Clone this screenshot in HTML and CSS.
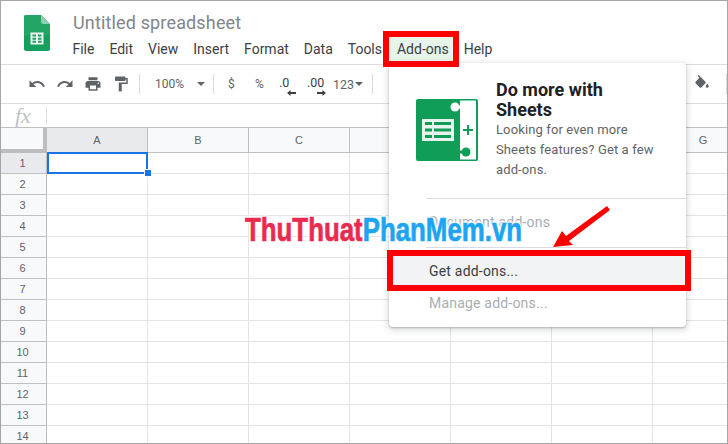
FILE: index.html
```html
<!DOCTYPE html>
<html lang="en">
<head>
<meta charset="utf-8">
<title>Untitled spreadsheet</title>
<link rel="stylesheet" href="styles.css">
</head>
<body>
<div class="frame">
  <header class="header">
    <svg class="logo" width="26" height="36" viewBox="0 0 26 36">
      <path d="M2 0H17L26 9V34a2 2 0 0 1-2 2H2a2 2 0 0 1-2-2V2a2 2 0 0 1 2-2z" fill="#16a05d"/>
      <path d="M2 0H17V7a2 2 0 0 0 2 2h7V20L2 20H0V2a2 2 0 0 1 2-2z" fill="#23a566"/>
      <path d="M17 0L26 9H19a2 2 0 0 1-2-2z" fill="#8ed1b1"/>
      <path d="M6.500 17.500H19.500V29.500H6.500z" fill="#f1f1f1"/>
      <path d="M8.500 19.500h3.500v2h-3.500zM14 19.500h3.500v2H14zM8.500 22.700h3.500v2h-3.500zM14 22.700h3.500v2H14zM8.500 25.800h3.500v2h-3.500zM14 25.800h3.500v2H14z" fill="#1ba261"/>
    </svg>
    <div class="heading">
      <div class="doc-title">Untitled spreadsheet</div>
      <nav class="menubar">
        <span class="menu-item">File</span>
        <span class="menu-item">Edit</span>
        <span class="menu-item">View</span>
        <span class="menu-item">Insert</span>
        <span class="menu-item">Format</span>
        <span class="menu-item">Data</span>
        <span class="menu-item">Tools</span>
        <span class="menu-item menu-active">Add-ons</span>
        <span class="menu-item">Help</span>
      </nav>
    </div>
  </header>

  <div class="toolbar">
    <svg class="tool" width="18" height="18" viewBox="0 0 24 24"><path fill="#5f6368" d="M12.500 8c-2.650 0-5.050.99-6.900 2.600L2 7v9h9l-3.620-3.620c1.390-1.160 3.160-1.880 5.120-1.880 3.540 0 6.550 2.310 7.600 5.500l2.370-.78C21.080 11.030 17.150 8 12.500 8z"/></svg>
    <svg class="tool" width="18" height="18" viewBox="0 0 24 24"><path fill="#5f6368" d="M18.400 10.600C16.550 8.990 14.150 8 11.500 8c-4.650 0-8.580 3.030-9.980 7.220l2.370.78c1.050-3.190 4.060-5.500 7.610-5.500 1.950 0 3.730.72 5.120 1.880L13 16h9V7l-3.600 3.600z"/></svg>
    <svg class="tool" width="18" height="18" viewBox="0 0 24 24"><path fill="#5f6368" d="M19 8H5c-1.660 0-3 1.340-3 3v6h4v4h12v-4h4v-6c0-1.660-1.340-3-3-3zm-3 11H8v-5h8v5zm3-7c-.55 0-1-.45-1-1s.45-1 1-1 1 .45 1 1-.45 1-1 1zm-1-9H6v4h12V3z"/></svg>
    <svg class="tool" width="18" height="18" viewBox="0 0 24 24"><path fill="#5f6368" d="M18 4V3c0-.55-.45-1-1-1H5c-.55 0-1 .45-1 1v4c0 .55.45 1 1 1h12c.55 0 1-.45 1-1V6h1v4H9v11c0 .55.45 1 1 1h2c.55 0 1-.45 1-1v-9h8V4h-3z"/></svg>
    <span class="sep sep-a"></span>
    <span class="zoom-value">100%</span>
    <span class="caret caret-zoom"></span>
    <span class="sep sep-b"></span>
    <span class="fmt fmt-dollar">$</span>
    <span class="fmt fmt-percent">%</span>
    <span class="fmt-dec fmt-dec-a">.0<svg class="dec-arrow" width="9" height="6" viewBox="0 0 9 6"><path d="M0 3L3.500 0V2H9V4H3.500V6z" fill="#3c4043"/></svg></span>
    <span class="fmt-dec fmt-dec-b">.00<svg class="dec-arrow dec-right" width="9" height="6" viewBox="0 0 9 6"><path d="M9 3L5.500 0V2H0V4H5.500V6z" fill="#3c4043"/></svg></span>
    <span class="fmt fmt-num">123</span>
    <span class="caret caret-num"></span>
    <span class="sep sep-c"></span>
    <svg class="bucket" width="18" height="18" viewBox="0 0 24 24"><path fill="#5f6368" d="M16.560 8.940L7.620 0 6.210 1.410l2.380 2.380-5.150 5.150c-.59.59-.59 1.540 0 2.120l5.500 5.500c.29.29.68.44 1.060.44s.77-.15 1.060-.44l5.500-5.500c.59-.58.59-1.530 0-2.120zM19 11.500s-2 2.170-2 3.500c0 1.100.9 2 2 2s2-.9 2-2c0-1.330-2-3.500-2-3.500z"/></svg>
    <span class="sep sep-d"></span>
  </div>

  <div class="formula">
    <span class="fx">fx</span>
    <span class="fx-sep"></span>
  </div>

  <div class="sheet">
    <div class="corner"></div>
    <div class="col-head col-on">A</div>
    <div class="col-head">B</div>
    <div class="col-head">C</div>
    <div class="col-head"></div>
    <div class="col-head"></div>
    <div class="col-head"></div>
    <div class="col-head">G</div>

    <div class="row-head row-on">1</div><div class="cell cell-active"><span class="handle"></span></div><div class="cell"></div><div class="cell"></div><div class="cell"></div><div class="cell"></div><div class="cell"></div><div class="cell"></div>
    <div class="row-head">2</div><div class="cell"></div><div class="cell"></div><div class="cell"></div><div class="cell"></div><div class="cell"></div><div class="cell"></div><div class="cell"></div>
    <div class="row-head">3</div><div class="cell"></div><div class="cell"></div><div class="cell"></div><div class="cell"></div><div class="cell"></div><div class="cell"></div><div class="cell"></div>
    <div class="row-head">4</div><div class="cell"></div><div class="cell"></div><div class="cell"></div><div class="cell"></div><div class="cell"></div><div class="cell"></div><div class="cell"></div>
    <div class="row-head">5</div><div class="cell"></div><div class="cell"></div><div class="cell"></div><div class="cell"></div><div class="cell"></div><div class="cell"></div><div class="cell"></div>
    <div class="row-head">6</div><div class="cell"></div><div class="cell"></div><div class="cell"></div><div class="cell"></div><div class="cell"></div><div class="cell"></div><div class="cell"></div>
    <div class="row-head">7</div><div class="cell"></div><div class="cell"></div><div class="cell"></div><div class="cell"></div><div class="cell"></div><div class="cell"></div><div class="cell"></div>
    <div class="row-head">8</div><div class="cell"></div><div class="cell"></div><div class="cell"></div><div class="cell"></div><div class="cell"></div><div class="cell"></div><div class="cell"></div>
    <div class="row-head">9</div><div class="cell"></div><div class="cell"></div><div class="cell"></div><div class="cell"></div><div class="cell"></div><div class="cell"></div><div class="cell"></div>
    <div class="row-head">10</div><div class="cell"></div><div class="cell"></div><div class="cell"></div><div class="cell"></div><div class="cell"></div><div class="cell"></div><div class="cell"></div>
    <div class="row-head">11</div><div class="cell"></div><div class="cell"></div><div class="cell"></div><div class="cell"></div><div class="cell"></div><div class="cell"></div><div class="cell"></div>
    <div class="row-head">12</div><div class="cell"></div><div class="cell"></div><div class="cell"></div><div class="cell"></div><div class="cell"></div><div class="cell"></div><div class="cell"></div>
    <div class="row-head">13</div><div class="cell"></div><div class="cell"></div><div class="cell"></div><div class="cell"></div><div class="cell"></div><div class="cell"></div><div class="cell"></div>
    <div class="row-head">14</div><div class="cell"></div><div class="cell"></div><div class="cell"></div><div class="cell"></div><div class="cell"></div><div class="cell"></div><div class="cell"></div>
  </div>

  <div class="dropdown">
    <section class="promo">
      <svg class="promo-icon" width="62" height="62" viewBox="0 0 62 62">
        <rect width="62" height="62" rx="2" fill="#0f9d58"/>
        <rect x="44" y="1.500" width="16" height="59" fill="#fff"/>
        <circle cx="39" cy="8" r="4.500" fill="#fff"/>
        <rect x="39" y="6.500" width="6" height="3" fill="#fff"/>
        <circle cx="50" cy="53" r="4.500" fill="#0f9d58"/>
        <rect x="44" y="51.500" width="6" height="3" fill="#0f9d58"/>
        <rect x="6" y="20" width="32" height="22" fill="#e6f4ec"/>
        <path d="M9 23h7v3H9zM18 23h17v3H18zM9 29.500h7v3H9zM18 29.500h17v3H18zM9 36h7v3H9zM18 36h17v3H18z" fill="#0f9d58"/>
        <path d="M51 26h2v4h4v2h-4v4h-2v-4h-4v-2h4z" fill="#0f9d58"/>
      </svg>
      <div class="promo-text">
        <h2 class="promo-title">Do more with Sheets</h2>
        <p class="promo-desc">Looking for even more Sheets features? Get a few add-ons.</p>
      </div>
    </section>
    <div class="dd-sep"></div>
    <div class="dd-item dd-muted dd-doc">Document add-ons</div>
    <div class="dd-sep dd-sep-2"></div>
    <div class="dd-item dd-hover">Get add-ons...</div>
    <div class="dd-item dd-muted dd-manage">Manage add-ons...</div>
  </div>

  <div class="mark mark-menu"></div>
  <div class="mark mark-item"></div>
  <svg class="arrow" width="64" height="50" viewBox="0 0 64 50">
    <path d="M3 47L12 31L16 36L57 6L60 10L19 41L23 45z" fill="#f00"/>
  </svg>
  <div class="watermark"><span class="wm-red">ThuThuat</span><span class="wm-blue">PhanMem.vn</span></div>
</div>
</body>
</html>
```
FILE: styles.css
```css
* { box-sizing: border-box; }
html, body { margin: 0; padding: 0; background: #fff; }
body { font-family: Roboto, "Liberation Sans", sans-serif; }

.frame {
  position: relative;
  width: 728px;
  height: 444px;
  overflow: hidden;
  border: 1px solid #a6a6a6;
  background: #fff;
}

/* header */
.header {
  display: flex;
  height: 64px;
  border-bottom: 1px solid #dadce0;
}
.logo { margin: 14px 0 0 23px; flex: none; }
.heading { margin-left: 15px; padding-top: 12px; }
.doc-title {
  margin-left: 8px;
  height: 20px;
  font-size: 18px;
  line-height: 20px;
  letter-spacing: .15px;
  color: #80868b;
}
.menubar {
  display: flex;
  margin-top: 4px;
  height: 24px;
  align-items: center;
  font-size: 14px;
  color: #3c4043;
}
.menu-item { padding: 0 7.47px; line-height: 24px; white-space: nowrap; }
.menu-active { background: #e6f4ea; padding: 0 4px 0 7.5px; margin-right: 3.5px; }

/* toolbar */
.toolbar {
  position: relative;
  display: flex;
  align-items: center;
  height: 39px;
  padding-left: 27px;
  border-bottom: 1px solid #dadce0;
  color: #5f6368;
  font-size: 12px;
}
.tool { margin-right: 10px; flex: none; }
.sep { width: 1px; height: 20px; background: #dadce0; flex: none; }
.sep-a { margin-left: -1px; }
.zoom-value { margin-left: 15px; width: 29px; flex: none; }
.caret {
  width: 0; height: 0; flex: none;
  border-left: 4px solid transparent;
  border-right: 4px solid transparent;
  border-top: 4px solid #5f6368;
}
.caret-zoom { margin-left: 13px; margin-right: 8px; }
.fmt-dollar { margin-left: 14px; width: 27px; flex: none; }
.fmt-percent { width: 24px; flex: none; }
.fmt-dec {
  position: relative;
  width: 28px;
  height: 18px;
  flex: none;
  line-height: 16px;
  color: #3c4043;
  font-size: 12.500px;
}
.fmt-dec-b { width: 26px; }
.dec-arrow { position: absolute; left: 8px; top: 15px; }
.dec-right { left: 10px; }
.fmt-num { width: 22px; flex: none; font-size: 12.500px; }
.caret-num { margin-right: 9px; }
.bucket { flex: none; margin-left: 320px; }
.sep-d { margin-left: 15px; }

/* formula */
.formula {
  display: flex;
  align-items: center;
  height: 23px;
}
.fx {
  margin-left: 14px;
  width: 31px;
  font: italic 22px "Liberation Serif", serif;
  color: #bdc1c6;
}
.fx-sep { width: 1px; height: 17px; background: #dadce0; }

/* grid */
.sheet {
  display: grid;
  grid-template-columns: 46px repeat(7, 101px);
  grid-template-rows: 25px repeat(14, 21px);
  font-size: 11px;
  color: #5f6368;
  font-family: "Liberation Sans", sans-serif;
  border-top: 1px solid #c0c0c0;
}
.corner {
  background: #f8f9fa;
  border-right: 4px solid #bdbdbd;
  border-bottom: 4px solid #bdbdbd;
}
.col-head {
  display: flex;
  align-items: center;
  justify-content: center;
  background: #f8f9fa;
  border-right: 1px solid #c0c0c0;
  border-bottom: 1px solid #c0c0c0;
}
.col-on { background: #e8eaed; }
.row-head {
  display: flex;
  align-items: center;
  justify-content: center;
  padding-right: 2px;
  background: #f8f9fa;
  border-right: 1px solid #bdbdbd;
  border-bottom: 1px solid #c0c0c0;
}
.row-on { background: #e8eaed; }
.cell {
  position: relative;
  border-right: 1px solid #e2e3e3;
  border-bottom: 1px solid #e2e3e3;
}
.cell-active { border: 2px solid #1a73e8; margin: -1px 0 0 0; z-index: 1; }
.handle {
  position: absolute;
  right: -6px;
  bottom: -5px;
  width: 8px;
  height: 8px;
  background: #1a73e8;
  border: 1px solid #fff;
}

/* dropdown */
.dropdown {
  position: absolute;
  left: 388px;
  top: 62px;
  width: 297px;
  height: 264px;
  background: #fff;
  border-radius: 4px;
  box-shadow: 0 2px 6px 2px rgba(60,64,67,.15), 0 1px 2px rgba(60,64,67,.3);
  z-index: 2;
}
.promo {
  display: flex;
  height: 135px;
  padding: 36px 0 0 27px;
}
.promo-icon { flex: none; margin-right: 18px; }
.promo-text { margin-top: -19px; width: 170px; }
.promo-title {
  margin: 0;
  width: 150px;
  font-size: 18px;
  line-height: 20px;
  font-weight: 700;
  color: #202124;
}
.promo-desc {
  margin: 0;
  font-size: 13px;
  line-height: 20px;
  letter-spacing: .12px;
  color: #5f6368;
}
.dd-sep { height: 1px; margin-left: 37px; background: #dadce0; }
.dd-item {
  height: 32px;
  line-height: 32px;
  padding-left: 40px;
  font-size: 14px;
  letter-spacing: .2px;
  color: #3c4043;
}
.dd-muted { color: #a9adb2; }
.dd-doc { height: 48px; line-height: 47px; }
.dd-hover { background: #f1f3f4; height: 31px; line-height: 31px; margin-top: 8px; }

/* annotations */
.mark { position: absolute; border: 6px solid #f00; z-index: 3; }
.mark-menu { left: 382px; top: 30px; width: 76px; height: 36px; }
.mark-item { left: 386px; top: 249px; width: 304px; height: 41px; }
.arrow { position: absolute; left: 549px; top: 199px; z-index: 3; }
.watermark {
  position: absolute;
  left: 244px;
  top: 211px;
  z-index: 3;
  font: 700 34px/34px "Liberation Sans", sans-serif;
  white-space: nowrap;
  transform: scaleX(.76);
  transform-origin: left top;
  -webkit-text-stroke: .7px currentColor;
  text-shadow: 0 0 2px rgba(255,255,255,.95), 0 0 3px rgba(255,255,255,.95), 2px 0 2px rgba(255,255,255,.9), -2px 0 2px rgba(255,255,255,.9), 0 2px 2px rgba(255,255,255,.9), 0 -2px 2px rgba(255,255,255,.9);
}
.wm-red { color: #ea2b4f; }
.wm-blue { color: #1da5f2; }
```
